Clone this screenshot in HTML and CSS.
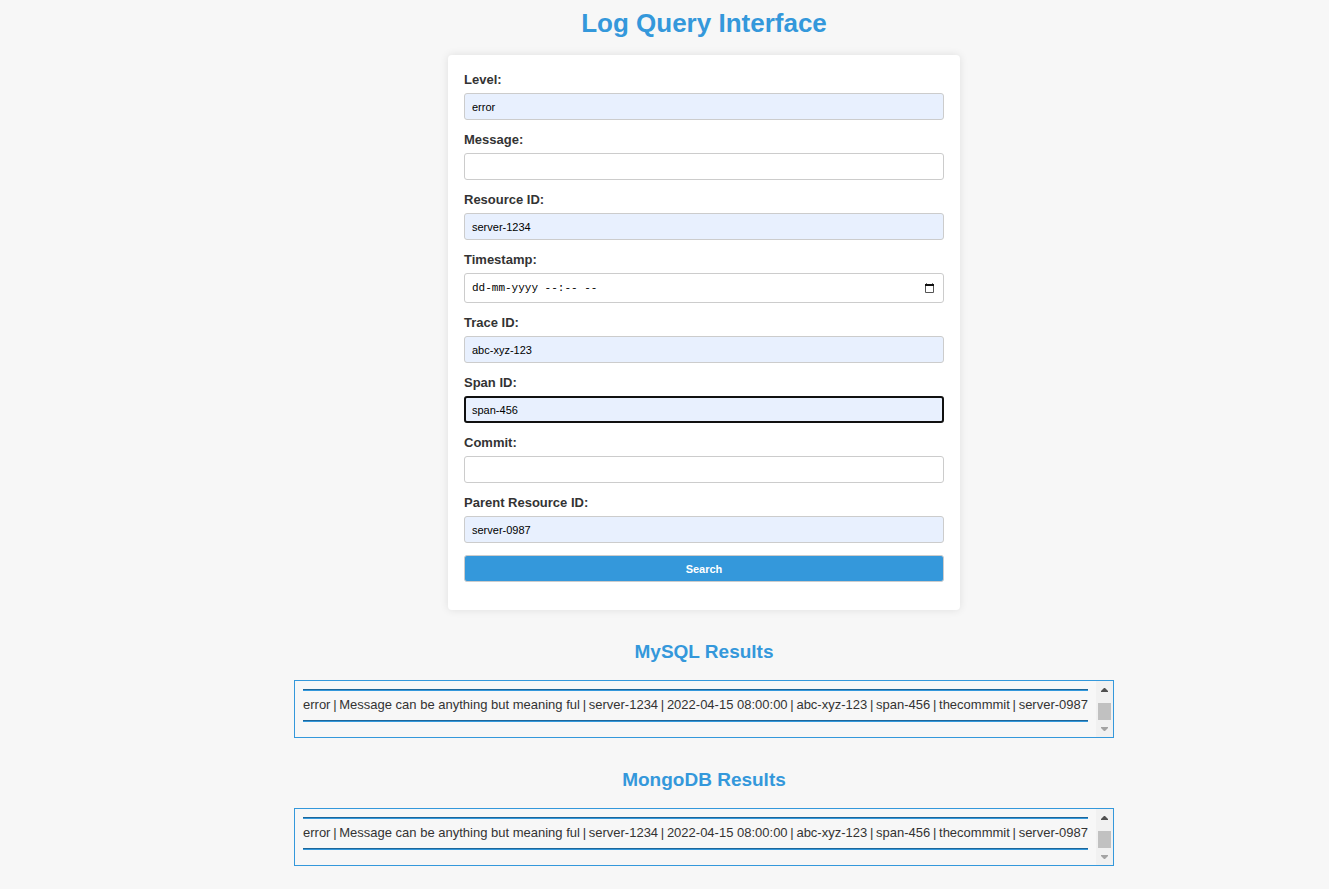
FILE: index.html
```html
<!DOCTYPE html>
<html lang="en">
<head>
<meta charset="utf-8">
<title>Log Query Interface</title>
<link rel="stylesheet" href="styles.css">
</head>
<body>
<main class="page">
  <h1 class="title">Log Query Interface</h1>
  <form class="card">
    <label class="label" for="level">Level:</label>
    <input class="field filled" id="level" type="text" value="error">
    <label class="label" for="message">Message:</label>
    <input class="field" id="message" type="text">
    <label class="label" for="resource">Resource ID:</label>
    <input class="field filled" id="resource" type="text" value="server-1234">
    <label class="label" for="timestamp">Timestamp:</label>
    <div class="field date">
      <input class="date-text" id="timestamp" type="text" value="dd-mm-yyyy --:-- --">
      <svg class="calendar" viewBox="0 0 9 10" aria-hidden="true"><path fill="#111" d="M0 1h9v2H0z"/><path fill="#777" d="M1 0h1v1H1zM7 0h1v1H7z"/><path fill="none" stroke="#555" d="M.5 3v6.5h8V3"/></svg>
    </div>
    <label class="label" for="trace">Trace ID:</label>
    <input class="field filled" id="trace" type="text" value="abc-xyz-123">
    <label class="label" for="span">Span ID:</label>
    <input class="field filled active" id="span" type="text" value="span-456">
    <label class="label" for="commit">Commit:</label>
    <input class="field" id="commit" type="text">
    <label class="label" for="parent">Parent Resource ID:</label>
    <input class="field filled" id="parent" type="text" value="server-0987">
    <button class="field search" type="button">Search</button>
  </form>
  <section class="results">
    <h2 class="heading">MySQL Results</h2>
    <div class="box">
      <div class="content">
        <hr class="rule">
        <p class="row"><span>error</span> <span>|</span> <span>Message can be anything but meaning ful</span> <span>|</span> <span>server-1234</span> <span>|</span> <span>2022-04-15 08:00:00</span> <span>|</span> <span>abc-xyz-123</span> <span>|</span> <span>span-456</span> <span>|</span> <span>thecommmit</span> <span>|</span> <span>server-0987</span></p>
        <hr class="rule">
      </div>
      <div class="scrollbar" aria-hidden="true">
        <svg class="arrow" viewBox="0 0 7 4"><path fill="#505050" d="M3 0h1l3 3v1H0V3z"/></svg>
        <span class="thumb"></span>
        <svg class="arrow" viewBox="0 0 7 4"><path fill="#a3a3a3" d="M0 0h7v1L4 4H3L0 1z"/></svg>
      </div>
    </div>
  </section>
  <section class="results">
    <h2 class="heading">MongoDB Results</h2>
    <div class="box">
      <div class="content">
        <hr class="rule">
        <p class="row"><span>error</span> <span>|</span> <span>Message can be anything but meaning ful</span> <span>|</span> <span>server-1234</span> <span>|</span> <span>2022-04-15 08:00:00</span> <span>|</span> <span>abc-xyz-123</span> <span>|</span> <span>span-456</span> <span>|</span> <span>thecommmit</span> <span>|</span> <span>server-0987</span></p>
        <hr class="rule">
      </div>
      <div class="scrollbar" aria-hidden="true">
        <svg class="arrow" viewBox="0 0 7 4"><path fill="#505050" d="M3 0h1l3 3v1H0V3z"/></svg>
        <span class="thumb"></span>
        <svg class="arrow" viewBox="0 0 7 4"><path fill="#a3a3a3" d="M0 0h7v1L4 4H3L0 1z"/></svg>
      </div>
    </div>
  </section>
</main>
</body>
</html>
```
FILE: styles.css
```css
* { box-sizing: border-box; }
body {
  margin: 0;
  background: #f7f7f7;
  color: #333;
  font-family: "Liberation Sans", Arial, sans-serif;
  font-size: 13px;
}
.page {
  display: flex;
  flex-direction: column;
  align-items: center;
  padding: 8px 0 16px 79px;
}
.title {
  margin: 0 0 17px;
  font-size: 26px;
  line-height: 30px;
  color: #3498db;
}
.card {
  display: flex;
  flex-direction: column;
  width: 100%;
  max-width: 512px;
  padding: 17px 16px 16px;
  background: #fff;
  border-radius: 4px;
  box-shadow: 0 0 8px rgba(0, 0, 0, 0.1);
}
.label {
  margin-bottom: 6px;
  line-height: 15px;
  font-weight: bold;
}
.field {
  width: 100%;
  height: 27px;
  margin: 0 0 12px;
  padding: 0 7px;
  border: 1px solid #ccc;
  border-radius: 3px;
  background: #fff;
  color: #000;
  font-family: inherit;
  font-size: 11px;
}
.filled { background: #e8f0fe; }
.active {
  padding: 0 6px;
  border: 2px solid #101010;
  outline: none;
}
.date {
  display: flex;
  align-items: center;
  height: 30px;
  padding-right: 9px;
}
.date-text {
  flex: 1;
  min-width: 0;
  padding: 0;
  border: 0;
  outline: none;
  background: transparent;
  font-family: "Liberation Mono", "Courier New", monospace;
  font-size: 11px;
}
.calendar { width: 9px; height: 10px; }
.search {
  background: #3498db;
  color: #fff;
  font-weight: bold;
}
.results {
  width: 100%;
  max-width: 820px;
  margin-top: 31px;
}
.heading {
  margin: 0 0 17px;
  font-size: 19px;
  line-height: 22px;
  color: #3498db;
  text-align: center;
}
.box {
  display: flex;
  height: 58px;
  border: 1px solid #3498db;
}
.content {
  flex: 1;
  min-width: 0;
  padding: 8px;
}
.rule {
  margin: 0;
  border: 0 solid;
  border-width: 1px 0;
  border-color: #1d6699 transparent #3498db;
}
.row {
  display: flex;
  justify-content: space-between;
  margin: 0;
  padding: 6px 0 8px;
  line-height: 15px;
  white-space: nowrap;
}
.scrollbar {
  display: flex;
  flex-direction: column;
  align-items: center;
  justify-content: space-between;
  width: 17px;
  padding: 7px 2px 6px;
  background: #f1f1f1;
}
.arrow { width: 7px; height: 4px; }
.thumb {
  width: 13px;
  height: 17px;
  margin-top: 4px;
  background: #c1c1c1;
}
```
